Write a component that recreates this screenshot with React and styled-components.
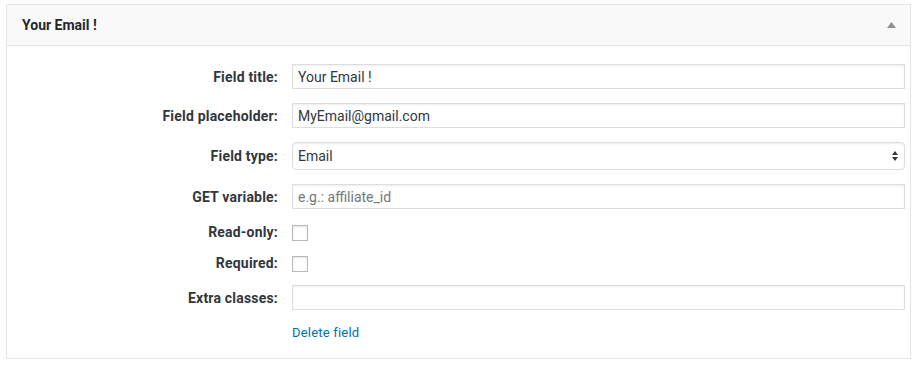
import React from "react";
import styled, { createGlobalStyle } from "styled-components";

const GlobalStyle = createGlobalStyle`
  body {
    margin: 0;
    background: #fff;
    font-family: Roboto, "Liberation Sans", Arial, sans-serif;
    color: #23282d;
  }
`;

const fields = [
  { label: "Field title:", kind: "text", value: "Your Email !" },
  { label: "Field placeholder:", kind: "text", value: "MyEmail@gmail.com" },
  { label: "Field type:", kind: "select", value: "Email" },
  { label: "GET variable:", kind: "text", placeholder: "e.g.: affiliate_id" },
  { label: "Read-only:", kind: "checkbox" },
  { label: "Required:", kind: "checkbox" },
  { label: "Extra classes:", kind: "text" },
];

const App = () => {
  return (
    <>
      <GlobalStyle />
      <Panel>
        <Header>
          <Title>Your Email !</Title>
          <Toggle aria-label="Collapse">
            <svg width="9" height="6" viewBox="0 0 9 6">
              <path d="M4.5 0 L9 6 L0 6 Z" fill="#8c8f94" />
            </svg>
          </Toggle>
        </Header>
        <Body>
          {fields.map((f) => (
            <React.Fragment key={f.label}>
              <Label>{f.label}</Label>
              {f.kind === "text" && (
                <TextInput
                  type="text"
                  defaultValue={f.value}
                  placeholder={f.placeholder}
                />
              )}
              {f.kind === "select" && (
                <SelectWrap>
                  <Select defaultValue={f.value}>
                    <option>Text</option>
                    <option>Email</option>
                    <option>Number</option>
                  </Select>
                  <SelectArrows width="6" height="10" viewBox="0 0 6 10">
                    <path d="M3 0 L6 4 L0 4 Z" fill="#32373c" />
                    <path d="M0 6 L6 6 L3 10 Z" fill="#32373c" />
                  </SelectArrows>
                </SelectWrap>
              )}
              {f.kind === "checkbox" && <Checkbox type="checkbox" />}
            </React.Fragment>
          ))}
          <span />
          <DeleteLink href="#">Delete field</DeleteLink>
        </Body>
      </Panel>
    </>
  );
};

export default App;

const Panel = styled.div`
  margin: 4px 0 0 6px;
  width: 905px;
  box-sizing: border-box;
  border: 1px solid #e5e5e5;
  box-shadow: 0 1px 1px rgba(0, 0, 0, 0.04);
  background: #fff;
`;

const Header = styled.div`
  display: flex;
  align-items: center;
  justify-content: space-between;
  height: 40px;
  padding: 0 14px 0 15px;
  background: #f9f9f9;
  border-bottom: 1px solid #e5e5e5;
`;

const Title = styled.h2`
  margin: 0;
  font-size: 14px;
  font-weight: 700;
  color: #23282d;
`;

const Toggle = styled.button`
  display: flex;
  align-items: center;
  padding: 0;
  border: 0;
  background: none;
  cursor: pointer;
`;

const Body = styled.div`
  display: grid;
  grid-template-columns: 271px 1fr;
  column-gap: 14px;
  row-gap: 14px;
  align-items: center;
  padding: 18px 5px 16px 0;
`;

const Label = styled.label`
  text-align: right;
  font-size: 14px;
  line-height: 16px;
  letter-spacing: 0.2px;
  font-weight: 700;
  color: #32373c;
`;

const TextInput = styled.input`
  box-sizing: border-box;
  width: 100%;
  height: 25px;
  margin: 0;
  padding: 0 5px;
  border: 1px solid #ddd;
  box-shadow: inset 0 1px 2px rgba(0, 0, 0, 0.07);
  font-family: Roboto, "Liberation Sans", Arial, sans-serif;
  font-size: 14px;
  color: #32373c;
  background: #fff;
  outline: none;

  &::placeholder {
    color: #72777c;
  }
`;

const SelectWrap = styled.div`
  position: relative;
`;

const Select = styled.select`
  box-sizing: border-box;
  width: 100%;
  height: 28px;
  margin: 0;
  padding: 0 5px;
  border: 1px solid #ddd;
  border-radius: 4px;
  box-shadow: inset 0 1px 2px rgba(0, 0, 0, 0.07);
  background: #fff;
  appearance: none;
  font-family: Roboto, "Liberation Sans", Arial, sans-serif;
  font-size: 14px;
  color: #32373c;
  outline: none;
`;

const SelectArrows = styled.svg`
  position: absolute;
  right: 7px;
  top: 9px;
  pointer-events: none;
`;

const Checkbox = styled.input`
  box-sizing: border-box;
  width: 16px;
  height: 16px;
  margin: 2px 0 -1px;
  align-self: start;
  appearance: none;
  border: 1px solid #b4b9be;
  background: #fff;
  box-shadow: inset 0 1px 2px rgba(0, 0, 0, 0.1);
`;

const DeleteLink = styled.a`
  font-size: 13px;
  letter-spacing: 0.2px;
  color: #0073aa;
  text-decoration: none;
  line-height: 18px;
`;
